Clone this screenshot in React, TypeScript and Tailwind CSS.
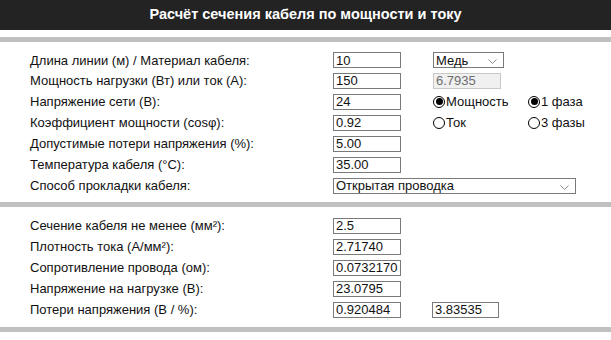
import type { ReactNode } from 'react';

const Box = ({ value, wide, disabled }: { value: string; wide?: boolean; disabled?: boolean }) => (
  <div
    className={`h-[16px] border flex items-center pl-[2px] text-[13px] leading-none ${
      wide ? 'w-[67px]' : 'w-[68px]'
    } ${disabled ? 'bg-[#f0f0f0] border-[#c8c8c8] text-[#6d6d6d]' : 'bg-white border-[#7a7a7a] text-[#111]'}`}
  >
    {value}
  </div>
);

const Chevron = () => (
  <svg width="9" height="5" viewBox="0 0 9 5" className="absolute right-[6px] top-[6px]">
    <path d="M0.5 0.5 L4.5 4.5 L8.5 0.5" fill="none" stroke="#8a8a8a" strokeWidth="1" />
  </svg>
);

const Select = ({ value, className }: { value: string; className: string }) => (
  <div className={`relative h-[16px] border border-[#7a7a7a] bg-white flex items-center pl-[2px] text-[13px] leading-none text-[#111] ${className}`}>
    {value}
    <Chevron />
  </div>
);

const Radio = ({ checked, label }: { checked?: boolean; label: string }) => (
  <div className="flex items-center text-[13px] leading-none text-[#111]">
    <span className="w-[12px] h-[12px] rounded-full border border-black flex items-center justify-center mr-[1px]">
      {checked && <span className="w-[7px] h-[7px] rounded-full bg-black" />}
    </span>
    {label}
  </div>
);

const Row = ({ label, children, first }: { label: string; children?: ReactNode; first?: boolean }) => (
  <div className={`flex items-center ${first ? 'h-[20px]' : 'h-[21px]'}`}>
    <div className="w-[333px] shrink-0 pl-[30px] text-[13px] text-[#111] leading-none">{label}</div>
    {children}
  </div>
);

const Bar = () => <div className="h-[5px] bg-[#c0c0c0]" />;

export default function App() {
  return (
    <div className="w-[611px] h-[340px] bg-white" style={{ fontFamily: '"Liberation Sans", Arial, sans-serif' }}>
      <div className="h-[30px] bg-[#232323] flex items-center justify-center text-white font-bold text-[14.5px]">
        Расчёт сечения кабеля по мощности и току
      </div>
      <div className="h-[7px]" />
      <Bar />
      <div className="pt-[8px] pb-[6px]">
        <Row label="Длина линии (м) / Материал кабеля:" first>
          <Box value="10" />
          <Select value="Медь" className="ml-[32px] w-[71px]" />
        </Row>
        <Row label="Мощность нагрузки (Вт) или ток (А):">
          <Box value="150" />
          <div className="ml-[32px]">
            <Box value="6.7935" disabled />
          </div>
        </Row>
        <Row label="Напряжение сети (В):">
          <Box value="24" />
          <div className="ml-[32px] w-[95px]">
            <Radio checked label="Мощность" />
          </div>
          <Radio checked label="1 фаза" />
        </Row>
        <Row label="Коэффициент мощности (cosφ):">
          <Box value="0.92" />
          <div className="ml-[32px] w-[95px]">
            <Radio label="Ток" />
          </div>
          <Radio label="3 фазы" />
        </Row>
        <Row label="Допустимые потери напряжения (%):">
          <Box value="5.00" />
        </Row>
        <Row label="Температура кабеля (°C):">
          <Box value="35.00" />
        </Row>
        <Row label="Способ прокладки кабеля:">
          <Select value="Открытая проводка" className="w-[243px]" />
        </Row>
      </div>
      <Bar />
      <div className="pt-[8px] pb-[7px]">
        <Row label="Сечение кабеля не менее (мм²):">
          <Box value="2.5" />
        </Row>
        <Row label="Плотность тока (А/мм²):">
          <Box value="2.71740" />
        </Row>
        <Row label="Сопротивление провода (ом):">
          <Box value="0.0732170" />
        </Row>
        <Row label="Напряжение на нагрузке (В):">
          <Box value="23.0795" />
        </Row>
        <Row label="Потери напряжения (В / %):">
          <Box value="0.920484" />
          <div className="ml-[31px]">
            <Box value="3.83535" wide />
          </div>
        </Row>
      </div>
      <Bar />
    </div>
  );
}
